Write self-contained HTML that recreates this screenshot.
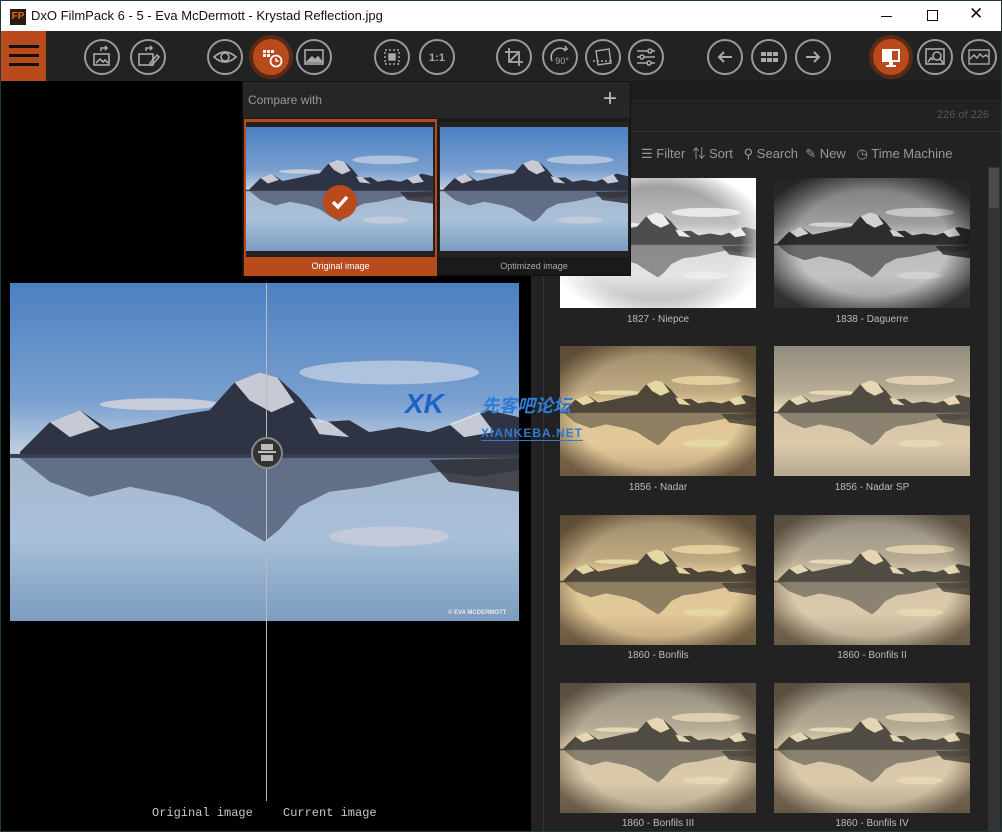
<!DOCTYPE html>
<html><head><meta charset="utf-8">
<style>
*{margin:0;padding:0;box-sizing:border-box}
body{width:1002px;height:832px;overflow:hidden;background:#1c3a36;font-family:"Liberation Sans","Noto Sans CJK SC",sans-serif;position:relative}
.abs{position:absolute}
#title{left:1px;top:1px;width:1000px;height:30px;background:#fff}
#title .t{left:30px;top:7px;font-size:13px;color:#111}
#tb{left:1px;top:31px;width:1000px;height:50px;background:#222}
.btn{position:absolute;top:8px;width:36px;height:36px;border:2px solid #9a9a9a;border-radius:50%}
.btn svg{position:absolute;left:0;top:0;width:32px;height:32px}
.on{background:#b84a1c;border-color:#b84a1c;box-shadow:0 0 0 4px #5b2a17}
#left{left:1px;top:81px;width:530px;height:750px;background:#000}
#right{left:531px;top:81px;width:470px;height:750px;background:#222}
.cap{font-size:10px;color:#bbb;text-align:center;position:absolute;width:196px}
.th{position:absolute;width:196px;height:130px;overflow:hidden}
.th svg{width:196px;height:130px;display:block}
.vig{position:absolute;inset:0;background:radial-gradient(ellipse 60% 62% at 50% 50%,transparent 70%,rgba(40,25,10,.55) 100%)}
.vigw{position:absolute;inset:0;background:radial-gradient(ellipse 58% 60% at 50% 50%,transparent 72%,rgba(255,255,255,1) 100%)}
.mono{font-family:"Liberation Mono",monospace;font-size:12px;color:#c8c8c8}
.sep1{filter:sepia(1) saturate(1.2) brightness(.95) contrast(.85)}
.sep2{filter:sepia(.85) brightness(1) contrast(.8)}
</style></head><body>
<svg width="0" height="0" style="position:absolute">
<defs>
<linearGradient id="sky" x1="0" y1="0" x2="0" y2="1"><stop offset="0" stop-color="#4b80c2"/><stop offset=".35" stop-color="#7aa0cf"/><stop offset=".5" stop-color="#c2cfe0"/><stop offset=".52" stop-color="#a7b8cf"/><stop offset=".75" stop-color="#a9c0d9"/><stop offset="1" stop-color="#7c9cc0"/></linearGradient>
<symbol id="land" viewBox="0 0 510 340" preserveAspectRatio="none">
<rect width="510" height="340" fill="url(#sky)"/>
<ellipse cx="380" cy="90" rx="90" ry="12" fill="#d8dfe9" opacity=".6"/>
<ellipse cx="150" cy="122" rx="60" ry="6" fill="#e5dde0" opacity=".7"/>
<path d="M10 170 L40 140 L70 128 L100 148 L140 140 L175 132 L200 128 L225 100 L250 90 L268 95 L290 115 L310 140 L340 138 L360 150 L390 145 L420 150 L450 140 L480 128 L510 135 L510 175 L10 175Z" fill="#2f3444"/>
<path d="M40 140 L70 128 L90 145 L60 155Z M225 100 L250 90 L268 95 L285 120 L262 130 L240 118Z M300 135 L320 140 L340 155 L310 152Z M440 142 L470 130 L485 150 L455 155Z" fill="#dfe5ee" opacity=".85"/>
<rect x="0" y="172" width="510" height="4" fill="#3a3f4e"/>
<path d="M10 176 L40 200 L80 215 L120 205 L170 215 L200 225 L230 245 L255 260 L270 248 L290 225 L320 210 L360 205 L400 196 L430 190 L470 195 L510 188 L510 176Z" fill="#4b5670" opacity=".75"/>
<path d="M420 178 L510 176 L510 210 L440 200Z" fill="#2a2a2e" opacity=".8"/>
<ellipse cx="380" cy="255" rx="60" ry="10" fill="#e6d6dc" opacity=".45"/>
</symbol>
</defs></svg>

<div id="title" class="abs">
 <div class="abs" style="left:9px;top:8px;width:16px;height:16px;background:#2a1a10;color:#e8641c;font-size:10px;font-weight:bold;line-height:16px;text-align:center">FP</div>
 <div class="t abs">DxO FilmPack 6 - 5 - Eva McDermott - Krystad Reflection.jpg</div>
 <div class="abs" style="left:880px;top:15px;width:11px;height:1px;background:#111"></div>
 <div class="abs" style="left:926px;top:9px;width:11px;height:11px;border:1px solid #111"></div>
 <div class="abs" style="left:968px;top:3px;font-size:17px;color:#111">✕</div>
</div>

<div id="tb" class="abs">
 <div class="abs" style="left:0;top:0;width:45px;height:50px;background:#b84a1c">
  <div class="abs" style="left:8px;top:14px;width:30px;height:3px;background:#111"></div>
  <div class="abs" style="left:8px;top:23px;width:30px;height:3px;background:#111"></div>
  <div class="abs" style="left:8px;top:32px;width:30px;height:3px;background:#111"></div>
 </div>
 <div class="btn" style="left:83px"><svg viewBox="0 0 32 32" fill="none" stroke="#aaa" stroke-width="1.6"><rect x="8" y="13" width="15" height="11"/><path d="M10 22l4-4 3 3 2-2 3 3"/><path d="M15 10v-3h6M19 5l2 2-2 2"/></svg></div>
 <div class="btn" style="left:129px"><svg viewBox="0 0 32 32" fill="none" stroke="#aaa" stroke-width="1.6"><rect x="7" y="13" width="14" height="11"/><path d="M14 10v-3h6M18 5l2 2-2 2M18 22l7-8 2 2-7 8z"/></svg></div>
 <div class="btn" style="left:206px"><svg viewBox="0 0 32 32" fill="none" stroke="#aaa" stroke-width="1.6"><path d="M5 16q11-10 22 0q-11 10-22 0z"/><circle cx="16" cy="16" r="4"/></svg></div>
 <div class="btn on" style="left:252px"><svg viewBox="0 0 32 32" fill="#fff"><rect x="8" y="9" width="3" height="3"/><rect x="12" y="9" width="3" height="3"/><rect x="16" y="9" width="3" height="3"/><rect x="8" y="13" width="3" height="3"/><rect x="12" y="13" width="3" height="3"/><circle cx="21" cy="20" r="5.5" fill="none" stroke="#fff" stroke-width="1.8"/><path d="M21 17v3h2.5" stroke="#fff" fill="none" stroke-width="1.5"/></svg></div>
 <div class="btn" style="left:295px"><svg viewBox="0 0 32 32" fill="none" stroke="#aaa" stroke-width="1.6"><rect x="7" y="9" width="18" height="14"/><path d="M9 21l5-5 3 3 3-3 4 5z" fill="#aaa"/></svg></div>
 <div class="btn" style="left:373px"><svg viewBox="0 0 32 32" fill="none" stroke="#aaa" stroke-width="1.4"><rect x="9" y="9" width="14" height="14" stroke-dasharray="2 2"/><rect x="13" y="13" width="6" height="6" fill="#aaa"/></svg></div>
 <div class="btn" style="left:418px"><svg viewBox="0 0 32 32"><text x="16" y="20" text-anchor="middle" font-size="11" font-weight="bold" fill="#aaa" font-family="Liberation Sans">1:1</text></svg></div>
 <div class="btn" style="left:495px"><svg viewBox="0 0 32 32" fill="none" stroke="#aaa" stroke-width="1.8"><path d="M11 7v14h14M7 11h14v14M11 21l10-10"/></svg></div>
 <div class="btn" style="left:541px"><svg viewBox="0 0 32 32" fill="none" stroke="#aaa" stroke-width="1.6"><path d="M8 20a9 9 0 0 1 12-12l3 0M21 5l2 3-3 2"/><text x="18" y="23" text-anchor="middle" font-size="9" fill="#aaa" stroke="none" font-family="Liberation Sans">90°</text></svg></div>
 <div class="btn" style="left:584px"><svg viewBox="0 0 32 32" fill="none" stroke="#aaa" stroke-width="1.4"><path d="M9 10l13-2 2 14-13 2z"/><path d="M6 20h20" stroke-dasharray="2 2"/></svg></div>
 <div class="btn" style="left:627px"><svg viewBox="0 0 32 32" fill="none" stroke="#aaa" stroke-width="1.6"><path d="M7 10h18M7 16h18M7 22h18"/><circle cx="20" cy="10" r="2" fill="#222"/><circle cx="12" cy="16" r="2" fill="#222"/><circle cx="19" cy="22" r="2" fill="#222"/></svg></div>
 <div class="btn" style="left:706px"><svg viewBox="0 0 32 32" fill="none" stroke="#aaa" stroke-width="2"><path d="M23 16H10M15 11l-5 5 5 5"/></svg></div>
 <div class="btn" style="left:750px"><svg viewBox="0 0 32 32" fill="#aaa"><rect x="8" y="11" width="5" height="4"/><rect x="14" y="11" width="5" height="4"/><rect x="20" y="11" width="5" height="4"/><rect x="8" y="17" width="5" height="4"/><rect x="14" y="17" width="5" height="4"/><rect x="20" y="17" width="5" height="4"/></svg></div>
 <div class="btn" style="left:794px"><svg viewBox="0 0 32 32" fill="none" stroke="#aaa" stroke-width="2"><path d="M9 16h13M17 11l5 5-5 5"/></svg></div>
 <div class="btn on" style="left:872px"><svg viewBox="0 0 32 32" fill="#fff"><rect x="7" y="8" width="18" height="13"/><rect x="17" y="10" width="6" height="9" fill="#b84a1c"/><rect x="14" y="21" width="4" height="3"/><rect x="11" y="24" width="10" height="2"/></svg></div>
 <div class="btn" style="left:916px"><svg viewBox="0 0 32 32" fill="none" stroke="#aaa" stroke-width="1.6"><rect x="7" y="8" width="18" height="15"/><circle cx="18" cy="15" r="4"/><path d="M21 18l4 5M9 21l3-4 2 2"/></svg></div>
 <div class="btn" style="left:960px"><svg viewBox="0 0 32 32" fill="none" stroke="#aaa" stroke-width="1.4"><rect x="6" y="9" width="20" height="14"/><path d="M7 18l4-4 3 3 3-4 3 3 3-2 2 2"/></svg></div>
</div>

<div id="left" class="abs">
 <svg class="abs" style="left:9px;top:202px;width:509px;height:338px"><use href="#land" width="509" height="338"/></svg>
 <div class="abs" style="left:447px;top:529px;font-size:6px;color:#e8e8e8;font-weight:bold">© EVA MCDERMOTT</div>
 <div class="abs" style="left:265px;top:202px;width:1px;height:518px;background:#bbb"></div>
 <div class="abs" style="left:250px;top:356px;width:32px;height:32px;border-radius:50%;background:#333;border:2px solid #888">
  <div class="abs" style="left:8px;top:5px;width:12px;height:6px;background:#bbb"></div>
  <div class="abs" style="left:5px;top:12px;width:18px;height:2px;background:#bbb"></div>
  <div class="abs" style="left:8px;top:16px;width:12px;height:6px;background:#bbb"></div>
 </div>
 <div class="abs mono" style="left:151px;top:725px">Original image</div>
 <div class="abs mono" style="left:282px;top:725px">Current image</div>
</div>

<div id="right" class="abs">
 <div class="abs" style="left:0;top:0;width:470px;height:20px;background:#1d1d1d;border-bottom:1px solid #2c2c2c"></div>
 <div class="abs" style="right:12px;top:28px;font-size:11px;color:#555">226 of 226</div>
 <div class="abs" style="left:0;top:50px;width:470px;height:1px;background:#333"></div>
 <div class="abs" style="left:12px;top:20px;width:1px;height:730px;background:#333"></div>
 <div class="abs" style="left:110px;top:62px;font-size:13px;color:#999;white-space:nowrap">☰ Filter &nbsp;⇅ Sort &nbsp;&nbsp;⚲ Search &nbsp;✎ New &nbsp;&nbsp;◷ Time Machine</div>
 <div class="abs" style="left:457px;top:86px;width:12px;height:664px;background:#333"></div>
 <div class="abs" style="left:458px;top:87px;width:10px;height:40px;background:#4a4a4a"></div>

 <div class="th" style="left:29px;top:97px"><svg style="filter:grayscale(1) brightness(1.3) contrast(.85)"><use href="#land" width="196" height="130"/></svg><div class="vigw"></div></div>
 <div class="cap" style="left:29px;top:233px">1827 - Niepce</div>
 <div class="th" style="left:243px;top:97px"><svg style="filter:grayscale(1) contrast(1.1)"><use href="#land" width="196" height="130"/></svg><div class="vig" style="background:radial-gradient(ellipse 60% 62% at 50% 50%,transparent 65%,rgba(0,0,0,.7) 100%)"></div></div>
 <div class="cap" style="left:243px;top:233px">1838 - Daguerre</div>

 <div class="th" style="left:29px;top:265px"><svg class="sep1"><use href="#land" width="196" height="130"/></svg><div class="vig"></div></div>
 <div class="cap" style="left:29px;top:401px">1856 - Nadar</div>
 <div class="th" style="left:243px;top:265px"><svg class="sep2"><use href="#land" width="196" height="130"/></svg></div>
 <div class="cap" style="left:243px;top:401px">1856 - Nadar SP</div>

 <div class="th" style="left:29px;top:434px"><svg class="sep1"><use href="#land" width="196" height="130"/></svg><div class="vig"></div></div>
 <div class="cap" style="left:29px;top:569px">1860 - Bonfils</div>
 <div class="th" style="left:243px;top:434px"><svg class="sep2"><use href="#land" width="196" height="130"/></svg><div class="vig"></div></div>
 <div class="cap" style="left:243px;top:569px">1860 - Bonfils II</div>

 <div class="th" style="left:29px;top:602px"><svg class="sep2"><use href="#land" width="196" height="130"/></svg><div class="vig"></div></div>
 <div class="cap" style="left:29px;top:737px">1860 - Bonfils III</div>
 <div class="th" style="left:243px;top:602px"><svg class="sep2"><use href="#land" width="196" height="130"/></svg><div class="vig"></div></div>
 <div class="cap" style="left:243px;top:737px">1860 - Bonfils IV</div>
</div>

<div class="abs" style="left:405px;top:388px;font-size:28px;font-weight:bold;color:#1e62c8;font-style:italic;white-space:nowrap">XK</div>
<div class="abs" style="left:481px;top:392px;font-size:18px;font-weight:bold;color:#2f7cd2;font-style:italic;white-space:nowrap">先客吧论坛</div>
<div class="abs" style="left:481px;top:426px;font-size:12px;font-weight:bold;color:#2f7cd2;letter-spacing:1px;white-space:nowrap;border-bottom:1px solid #2f7cd2">XIANKEBA.NET</div>

<div class="abs" style="left:242px;top:81px;width:389px;height:195px;background:#1a1a1a;border:1px solid #111">
 <div class="abs" style="left:0;top:0;width:387px;height:36px;background:#262626"></div>
 <div class="abs" style="left:5px;top:11px;font-size:12px;color:#999">Compare with</div>
 <div class="abs" style="left:360px;top:3px;font-size:24px;color:#bbb">+</div>
 <div class="abs" style="left:1px;top:37px;width:193px;height:157px;background:#b84a1c"></div>
 <div class="abs" style="left:3px;top:40px;width:189px;height:135px;background:#222"></div>
 <svg class="abs" style="left:3px;top:45px;width:187px;height:124px"><use href="#land" width="187" height="124"/></svg>
 <div class="abs" style="left:80px;top:103px;width:34px;height:34px;border-radius:50%;background:#b84a1c"><svg width="34" height="34"><path d="M10 17l5 5 9-10" stroke="#fff" stroke-width="3.5" fill="none"/></svg></div>
 <div class="abs" style="left:1px;top:179px;width:193px;text-align:center;font-size:9px;color:#fff">Original image</div>
 <div class="abs" style="left:196px;top:40px;width:190px;height:135px;background:#222"></div>
 <svg class="abs" style="left:197px;top:45px;width:188px;height:124px"><use href="#land" width="188" height="124"/></svg>
 <div class="abs" style="left:196px;top:179px;width:190px;text-align:center;font-size:9px;color:#aaa">Optimized image</div>
</div>
</body></html>
